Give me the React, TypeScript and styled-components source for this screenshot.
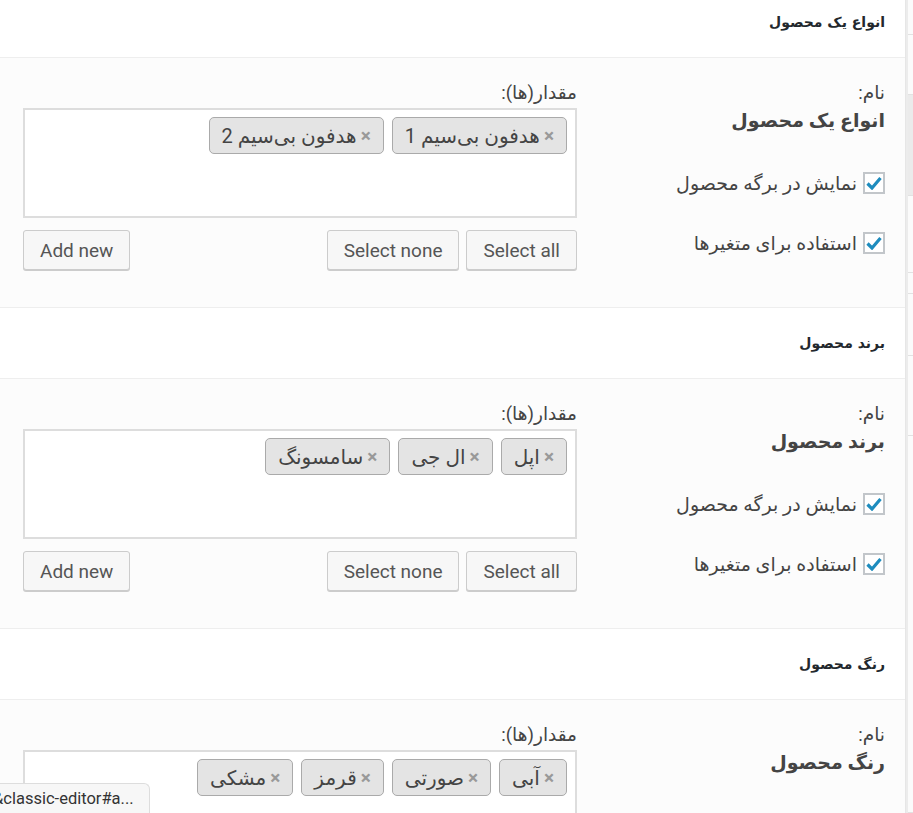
import React from 'react';
import styled, { createGlobalStyle } from 'styled-components';

const GlobalStyle = createGlobalStyle`
  html, body {
    margin: 0;
    padding: 0;
    overflow: hidden;
    background: #ffffff;
  }
  body {
    font-family: Roboto, "DejaVu Sans", sans-serif;
    color: #444444;
  }
`;

const Page = styled.div`
  display: flex;
  height: 813px;
  overflow: hidden;
`;

const Panel = styled.div`
  width: 905px;
  direction: rtl;
  border-right: 1px solid #e6e6e6;
  margin-top: -13px;
`;

const SideStrip = styled.div`
  flex: 1;
  display: flex;
  flex-direction: column;
  border-left: 2px solid #ececec;
`;

const StripPart = styled.div<{ $h: number; $shade: boolean }>`
  height: ${p => p.$h}px;
  background: ${p => (p.$shade ? '#ebebeb' : '#fbfbfb')};
  border-bottom: 1px solid #e2e2e2;
`;

const AttrHeader = styled.div`
  height: 70px;
  display: flex;
  align-items: center;
  padding: 0 20px;
  background: #ffffff;
  border-bottom: 1px solid #eeeeee;
  font-family: "DejaVu Sans", sans-serif;
  font-size: 14px;
  font-weight: bold;
  color: #23282d;
`;

const AttrBody = styled.div`
  display: flex;
  gap: 22px;
  padding: 25px 20px 37px 23px;
  background: #fcfcfc;
  border-bottom: 1px solid #eeeeee;
`;

const NameCol = styled.div`
  width: 286px;
  flex-shrink: 0;
  display: flex;
  flex-direction: column;
`;

const FieldLabel = styled.div`
  font-size: 18.5px;
  line-height: 20px;
  color: #444444;
`;

const NameValue = styled.div`
  margin-top: 6px;
  margin-bottom: 35px;
  font-size: 19px;
  line-height: 24px;
  font-weight: bold;
  color: #444444;
`;

const CheckRow = styled.label`
  display: flex;
  align-items: center;
  gap: 6px;
  height: 30px;
  font-size: 19px;
  color: #444444;

  & + & {
    margin-top: 30px;
  }
`;

const CheckBox = styled.span`
  width: 22px;
  height: 22px;
  box-sizing: border-box;
  border: 2px solid #c2c6ca;
  background: #ffffff;
  display: flex;
  align-items: center;
  justify-content: center;
`;

const ValuesCol = styled.div`
  flex: 1;
  display: flex;
  flex-direction: column;
`;

const TagBox = styled.div`
  margin-top: 5px;
  height: 110px;
  box-sizing: border-box;
  border: 2px solid #dddddd;
  background: #ffffff;
  padding: 7px 8px;
  display: flex;
  flex-wrap: wrap;
  align-content: flex-start;
  gap: 8px;
`;

const Tag = styled.span`
  height: 37px;
  box-sizing: border-box;
  display: inline-flex;
  align-items: center;
  gap: 4px;
  padding: 0 12px 0 12px;
  background: #e4e4e4;
  border: 1px solid #aaaaaa;
  border-radius: 5px;
  font-size: 20px;
  color: #444444;
`;

const TagRemove = styled.span`
  font-family: Roboto, sans-serif;
  font-size: 19px;
  font-weight: bold;
  color: #999999;
`;

const ButtonRow = styled.div`
  margin-top: 12px;
  display: flex;
  justify-content: space-between;
`;

const ButtonGroup = styled.div`
  display: flex;
  gap: 7px;
`;

const Button = styled.button`
  height: 40px;
  padding: 0 16px;
  direction: ltr;
  font-family: Roboto, sans-serif;
  font-size: 19px;
  color: #555555;
  background: #f7f7f7;
  border: 1px solid #cccccc;
  border-radius: 3px;
  box-shadow: 0 1px 0 #cccccc;
`;

const StatusBubble = styled.div`
  position: fixed;
  left: 0;
  bottom: 0;
  width: 150px;
  height: 30px;
  box-sizing: border-box;
  display: flex;
  align-items: center;
  overflow: hidden;
  white-space: nowrap;
  background: #f7f7f7;
  border: 1px solid #dddddd;
  border-left: none;
  border-bottom: none;
  border-top-right-radius: 6px;
  font-family: Roboto, sans-serif;
  font-size: 16.5px;
  color: #333333;
  text-indent: -7px;
`;

const Check = () => (
  <svg width="16" height="14" viewBox="0 0 16 14">
    <path d="M1.5 7.5 L6 12 L14.5 2" fill="none" stroke="#1e8cbe" strokeWidth="3.2" />
  </svg>
);

const attributes = [
  { name: 'انواع یک محصول', values: ['هدفون بی‌سیم 1', 'هدفون بی‌سیم 2'] },
  { name: 'برند محصول', values: ['اپل', 'ال جی', 'سامسونگ'] },
  { name: 'رنگ محصول', values: ['آبی', 'صورتی', 'قرمز', 'مشکی'] },
];

const strip = [
  { h: 34, shade: false },
  { h: 60, shade: false },
  { h: 101, shade: true },
  { h: 77, shade: false },
  { h: 20, shade: false },
  { h: 61, shade: false },
  { h: 80, shade: false },
  { h: 380, shade: false },
];

const App = () => (
  <Page>
    <GlobalStyle />
    <Panel>
      {attributes.map(attr => (
        <div key={attr.name}>
          <AttrHeader>{attr.name}</AttrHeader>
          <AttrBody>
            <NameCol>
              <FieldLabel>نام:</FieldLabel>
              <NameValue>{attr.name}</NameValue>
              <CheckRow>
                <CheckBox><Check /></CheckBox>
                نمایش در برگه محصول
              </CheckRow>
              <CheckRow>
                <CheckBox><Check /></CheckBox>
                استفاده برای متغیرها
              </CheckRow>
            </NameCol>
            <ValuesCol>
              <FieldLabel>مقدار(ها):</FieldLabel>
              <TagBox>
                {attr.values.map(v => (
                  <Tag key={v}>
                    <TagRemove>×</TagRemove>
                    {v}
                  </Tag>
                ))}
              </TagBox>
              <ButtonRow>
                <ButtonGroup>
                  <Button>Select all</Button>
                  <Button>Select none</Button>
                </ButtonGroup>
                <Button>Add new</Button>
              </ButtonRow>
            </ValuesCol>
          </AttrBody>
        </div>
      ))}
    </Panel>
    <SideStrip>
      {strip.map((s, i) => (
        <StripPart key={i} $h={s.h} $shade={s.shade} />
      ))}
    </SideStrip>
    <StatusBubble>&amp;classic-editor#a...</StatusBubble>
  </Page>
);

export default App;
